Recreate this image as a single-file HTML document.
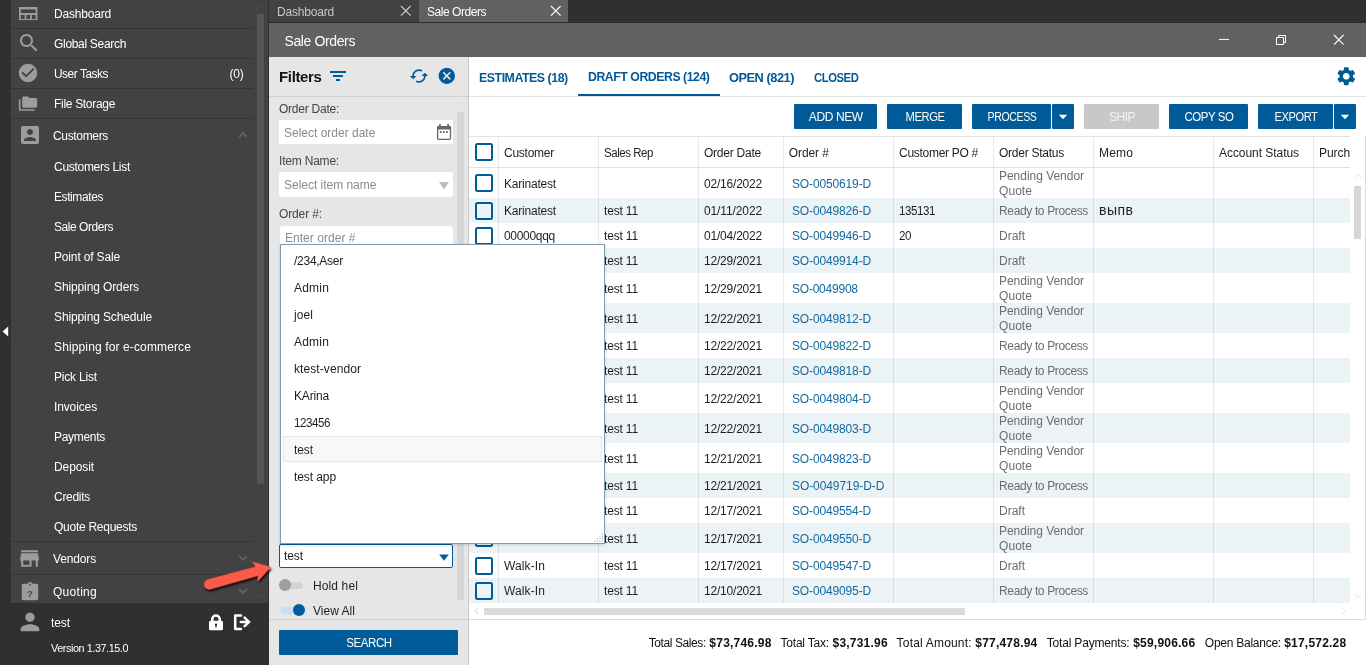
<!DOCTYPE html>
<html lang="en"><head><meta charset="utf-8"><title>Sale Orders</title>
<style>
html,body{margin:0;padding:0;}
body{width:1366px;height:665px;overflow:hidden;background:#303030;font-family:"Liberation Sans", sans-serif;}
#app{position:relative;width:1366px;height:665px;overflow:hidden;background:#303030;will-change:transform;}
.r{position:absolute;display:block;}
.t{position:absolute;display:block;white-space:nowrap;line-height:20px;height:20px;font-family:"Liberation Sans", sans-serif;}
</style></head><body><div id="app">
<div class="r" style="left:0px;top:0px;width:11px;height:665px;background:#303030;"></div>
<svg class="r" style="left:2px;top:326px;" width="7" height="11" viewBox="0 0 7 11" preserveAspectRatio="none"><path d="M0.6 5.5L6.2 0.6V10.4Z" fill="#fff"/></svg>
<div class="r" style="left:11px;top:0px;width:257px;height:603px;background:#424242;"></div>
<div class="r" style="left:11px;top:603px;width:257px;height:62px;background:#303030;"></div>
<div class="r" style="left:268px;top:0px;width:1px;height:665px;background:#303030;"></div>
<span class="t" style="left:54.00px;top:4.00px;font-size:12px;color:#fff;letter-spacing:-0.190px;">Dashboard</span>
<span class="t" style="left:54.00px;top:34.00px;font-size:12px;color:#fff;letter-spacing:-0.311px;">Global Search</span>
<span class="t" style="left:54.00px;top:64.00px;font-size:12px;color:#fff;letter-spacing:-0.450px;transform:scaleX(0.9885);transform-origin:left center;">User Tasks</span>
<span class="t" style="left:54.00px;top:94.00px;font-size:12px;color:#fff;letter-spacing:-0.308px;">File Storage</span>
<span class="t" style="right:1122.50px;top:64.00px;font-size:12px;color:#fff;letter-spacing:-0.222px;">(0)</span>
<div class="r" style="left:11px;top:28px;width:242px;height:1px;background:#353535;"></div>
<div class="r" style="left:11px;top:58px;width:242px;height:1px;background:#353535;"></div>
<div class="r" style="left:11px;top:88px;width:242px;height:1px;background:#353535;"></div>
<div class="r" style="left:11px;top:118px;width:242px;height:1px;background:#353535;"></div>
<span class="t" style="left:53.00px;top:126.00px;font-size:12px;color:#fff;letter-spacing:-0.335px;">Customers</span>
<span class="t" style="left:53.00px;top:549.00px;font-size:12px;color:#fff;letter-spacing:-0.148px;">Vendors</span>
<span class="t" style="left:53.00px;top:582.00px;font-size:12px;color:#fff;letter-spacing:0.281px;">Quoting</span>
<div class="r" style="left:11px;top:541px;width:241px;height:1px;background:#353535;"></div>
<div class="r" style="left:11px;top:574px;width:241px;height:1px;background:#353535;"></div>
<span class="t" style="left:54.00px;top:157.00px;font-size:12px;color:#fff;letter-spacing:-0.287px;">Customers List</span>
<span class="t" style="left:54.00px;top:187.00px;font-size:12px;color:#fff;letter-spacing:-0.409px;">Estimates</span>
<span class="t" style="left:54.00px;top:217.00px;font-size:12px;color:#fff;letter-spacing:-0.450px;">Sale Orders</span>
<span class="t" style="left:54.00px;top:247.00px;font-size:12px;color:#fff;letter-spacing:-0.157px;">Point of Sale</span>
<span class="t" style="left:54.00px;top:277.00px;font-size:12px;color:#fff;letter-spacing:-0.114px;">Shipping Orders</span>
<span class="t" style="left:54.00px;top:307.00px;font-size:12px;color:#fff;letter-spacing:-0.122px;">Shipping Schedule</span>
<span class="t" style="left:54.00px;top:337.00px;font-size:12px;color:#fff;letter-spacing:0.128px;">Shipping for e-commerce</span>
<span class="t" style="left:54.00px;top:367.00px;font-size:12px;color:#fff;letter-spacing:-0.186px;">Pick List</span>
<span class="t" style="left:54.00px;top:397.00px;font-size:12px;color:#fff;letter-spacing:-0.128px;">Invoices</span>
<span class="t" style="left:54.00px;top:427.00px;font-size:12px;color:#fff;letter-spacing:-0.295px;">Payments</span>
<span class="t" style="left:54.00px;top:457.00px;font-size:12px;color:#fff;letter-spacing:-0.098px;">Deposit</span>
<span class="t" style="left:54.00px;top:487.00px;font-size:12px;color:#fff;letter-spacing:-0.287px;">Credits</span>
<span class="t" style="left:54.00px;top:517.00px;font-size:12px;color:#fff;letter-spacing:-0.266px;">Quote Requests</span>
<svg class="r" style="left:19.3px;top:6.7px;" width="18.4" height="13.7" viewBox="0 0 18.400 13.700" preserveAspectRatio="none"><path fill="none" stroke="#9c9c9c" stroke-width="1.800" d="M0.900 0.900H17.500V12.800H0.900Z M0.900 7H17.500 M6.500 7V12.800 M11.900 7V12.800"/><rect x="0.900" y="0.900" width="16.600" height="1.500" fill="#9c9c9c"/></svg>
<svg class="r" style="left:17px;top:31px;" width="24" height="24" viewBox="0 0 24 24" preserveAspectRatio="none"><path fill="#9c9c9c" d="M15.5 14h-.79l-.28-.27C15.41 12.59 16 11.11 16 9.5 16 5.91 13.09 3 9.5 3S3 5.91 3 9.5 5.91 16 9.5 16c1.61 0 3.09-.59 4.23-1.57l.27.28v.79l5 4.99L20.49 19l-4.99-5zm-6 0C7.01 14 5 11.99 5 9.5S7.01 5 9.5 5 14 7.01 14 9.5 11.99 14 9.5 14z"/></svg>
<svg class="r" style="left:17.1px;top:62px;" width="22" height="22" viewBox="0 0 24 24" preserveAspectRatio="none"><path fill="#9c9c9c" d="M12 2C6.48 2 2 6.48 2 12s4.48 10 10 10 10-4.48 10-10S17.52 2 12 2zm-2 15l-5-5 1.41-1.41L10 14.17l7.59-7.59L19 8l-9 9z"/></svg>
<svg class="r" style="left:18.3px;top:94.8px;" width="20" height="18" viewBox="0 0 24 24" preserveAspectRatio="none"><path fill="#9c9c9c" d="M3 6H1v13c0 1.1.9 2 2 2h17v-2H3V6z M21 4h-7l-2-2H7c-1.1 0-1.99.9-1.99 2L5 15c0 1.1.9 2 2 2h14c1.1 0 2-.9 2-2V6c0-1.1-.9-2-2-2z"/></svg>
<svg class="r" style="left:17.7px;top:123.3px;" width="24" height="24" viewBox="0 0 24 24" preserveAspectRatio="none"><path fill="#9c9c9c" d="M3 5v14c0 1.1.89 2 2 2h14c1.1 0 2-.9 2-2V5c0-1.1-.9-2-2-2H5c-1.11 0-2 .9-2 2zm12 4c0 1.66-1.34 3-3 3s-3-1.34-3-3 1.34-3 3-3 3 1.34 3 3zm-9 8c0-2 4-3.1 6-3.1s6 1.1 6 3.1v1H6v-1z"/></svg>
<svg class="r" style="left:17px;top:545.7px;" width="25" height="25" viewBox="0 0 24 24" preserveAspectRatio="none"><path fill="#9c9c9c" d="M20 4H4v2h16V4zm1 10v-2l-1-5H4l-1 5v2h1v6h10v-6h4v6h2v-6h1zm-9 4H6v-4h6v4z"/></svg>
<svg class="r" style="left:18.5px;top:581px;" width="22" height="22" viewBox="0 0 24 24" preserveAspectRatio="none"><path fill="#9c9c9c" d="M19 3h-4.18C14.4 1.84 13.3 1 12 1s-2.4.84-2.82 2H5c-1.1 0-2 .9-2 2v14c0 1.1.9 2 2 2h14c1.1 0 2-.9 2-2V5c0-1.1-.9-2-2-2zm-7 0c.55 0 1 .45 1 1s-.45 1-1 1-1-.45-1-1 .45-1 1-1z"/><text x="12" y="17.5" font-size="10.500" font-weight="700" text-anchor="middle" fill="#424242" font-family='"Liberation Sans",sans-serif'>?</text></svg>
<svg class="r" style="left:234.8px;top:126.5px;" width="16" height="16" viewBox="-8 -8 16 16" preserveAspectRatio="none"><path d="M-3.8 1.9L0 -1.9L3.8 1.9" fill="none" stroke="#646464" stroke-width="1.9"/></svg>
<svg class="r" style="left:234.8px;top:550px;" width="16" height="16" viewBox="-8 -8 16 16" preserveAspectRatio="none"><path d="M-3.8 -1.9L0 1.9L3.8 -1.9" fill="none" stroke="#646464" stroke-width="1.9"/></svg>
<svg class="r" style="left:234.8px;top:583px;" width="16" height="16" viewBox="-8 -8 16 16" preserveAspectRatio="none"><path d="M-3.8 -1.9L0 1.9L3.8 -1.9" fill="none" stroke="#646464" stroke-width="1.9"/></svg>
<div class="r" style="left:257px;top:14px;width:7px;height:470px;background:#555;"></div>
<svg class="r" style="left:252.5px;top:-1px;" width="16" height="16" viewBox="-8 -8 16 16" preserveAspectRatio="none"><path d="M-3.5 1.75L0 -1.75L3.5 1.75" fill="none" stroke="#505050" stroke-width="1"/></svg>
<svg class="r" style="left:252.5px;top:588px;" width="16" height="16" viewBox="-8 -8 16 16" preserveAspectRatio="none"><path d="M-3.5 -1.75L0 1.75L3.5 -1.75" fill="none" stroke="#505050" stroke-width="1"/></svg>
<svg class="r" style="left:16px;top:608.1px;" width="28" height="28" viewBox="0 0 24 24" preserveAspectRatio="none"><path fill="#9c9c9c" d="M12 12c2.21 0 4-1.79 4-4s-1.79-4-4-4-4 1.79-4 4 1.79 4 4 4zm0 2c-2.67 0-8 1.34-8 4v2h16v-2c0-2.66-5.33-4-8-4z"/></svg>
<span class="t" style="left:51.00px;top:613.00px;font-size:12px;color:#fff;letter-spacing:-0.085px;">test</span>
<span class="t" style="left:51.00px;top:638.00px;font-size:11.5px;color:#fff;letter-spacing:-0.431px;transform:scaleX(0.9369);transform-origin:left center;">Version 1.37.15.0</span>
<svg class="r" style="left:206px;top:611px;" width="48" height="22" viewBox="206 611 48 22" preserveAspectRatio="none"><rect x="209" y="620.700" width="14" height="9.500" rx="1.500" fill="#fff"/><path d="M212.250 622V619.300A3.750 3.750 0 0 1 219.750 619.300V622" fill="none" stroke="#fff" stroke-width="2.600"/><circle cx="216" cy="624.700" r="1.150" fill="#303030"/><rect x="215.450" y="624.700" width="1.100" height="3" fill="#303030"/><path d="M241 615.400H235.200V628.900H241" fill="none" stroke="#fff" stroke-width="2.500" stroke-linecap="round" stroke-linejoin="round"/><path d="M240.800 621.900H248.300M244.600 617.600L249 621.900L244.600 626.200" fill="none" stroke="#fff" stroke-width="2.500" stroke-linecap="round" stroke-linejoin="miter"/></svg>
<div class="r" style="left:269px;top:0px;width:149.5px;height:22px;background:#424242;"></div>
<div class="r" style="left:419px;top:0px;width:149px;height:22px;background:#616161;"></div>
<div class="r" style="left:269px;top:22px;width:1097px;height:1px;background:#2b2b2b;"></div>
<span class="t" style="left:277.00px;top:2.00px;font-size:12px;color:#c8c8c8;letter-spacing:-0.190px;">Dashboard</span>
<span class="t" style="left:427.00px;top:2.00px;font-size:12px;color:#fff;letter-spacing:-0.450px;">Sale Orders</span>
<svg class="r" style="left:400.2px;top:4.8999999999999995px;" width="11.6" height="11.6" viewBox="-5.8 -5.8 11.6 11.6" preserveAspectRatio="none"><path d="M-4.8 -4.8L4.8 4.8M4.8 -4.8L-4.8 4.8" stroke="#d0d0d0" stroke-width="1.1" fill="none"/></svg>
<svg class="r" style="left:550.2px;top:4.8999999999999995px;" width="11.6" height="11.6" viewBox="-5.8 -5.8 11.6 11.6" preserveAspectRatio="none"><path d="M-4.8 -4.8L4.8 4.8M4.8 -4.8L-4.8 4.8" stroke="#fff" stroke-width="1.1" fill="none"/></svg>
<div class="r" style="left:269px;top:23px;width:1097px;height:34px;background:#616161;"></div>
<span class="t" style="left:284.50px;top:31.00px;font-size:14px;color:#fff;letter-spacing:-0.382px;">Sale Orders</span>
<div class="r" style="left:1219px;top:39.4px;width:10px;height:1.1px;background:#f4f4f4;"></div>
<svg class="r" style="left:1275.3px;top:34.2px;" width="12" height="12" viewBox="0 0 12 12" preserveAspectRatio="none"><path d="M1.500 3.500H8.500V10.500H1.500Z M3.500 3.500V1.500H10.500V8.500H8.500" fill="none" stroke="#fff" stroke-width="1"/></svg>
<svg class="r" style="left:1332.7px;top:34.300000000000004px;" width="11.6" height="11.6" viewBox="-5.8 -5.8 11.6 11.6" preserveAspectRatio="none"><path d="M-4.8 -4.8L4.8 4.8M4.8 -4.8L-4.8 4.8" stroke="#fff" stroke-width="1.1" fill="none"/></svg>
<div class="r" style="left:269px;top:57px;width:199px;height:608px;background:#e6e6e6;"></div>
<div class="r" style="left:468px;top:57px;width:1px;height:608px;background:#c9c9c9;"></div>
<div class="r" style="left:469px;top:57px;width:897px;height:608px;background:#fff;"></div>
<span class="t" style="left:279.00px;top:67.00px;font-size:15px;color:#111;letter-spacing:-0.345px;font-weight:700;">Filters</span>
<div class="r" style="left:329.8px;top:70.8px;width:16.4px;height:2.2px;background:#005b99;"></div>
<div class="r" style="left:332.9px;top:75px;width:10.3px;height:2.2px;background:#005b99;"></div>
<div class="r" style="left:336.2px;top:79.2px;width:3.8px;height:2.2px;background:#005b99;"></div>
<svg class="r" style="left:409px;top:65.6px;" width="20" height="20" viewBox="0 0 24 24" preserveAspectRatio="none"><path fill="#005b99" d="M19 8l-4 4h3c0 3.310-2.690 6-6 6-1.010 0-1.970-.250-2.800-.700l-1.460 1.460C8.970 19.540 10.430 20 12 20c4.420 0 8-3.580 8-8h3l-4-4zM6 12c0-3.310 2.690-6 6-6 1.010 0 1.970.250 2.800.700l1.460-1.460C15.030 4.460 13.570 4 12 4c-4.420 0-8 3.580-8 8H1l4 4 4-4H6z"/></svg>
<svg class="r" style="left:437.2px;top:66.2px;" width="19.6" height="19.6" viewBox="0 0 24 24" preserveAspectRatio="none"><path fill="#005b99" d="M12 2C6.470 2 2 6.470 2 12s4.470 10 10 10 10-4.470 10-10S17.530 2 12 2zm5 13.590L15.590 17 12 13.410 8.410 17 7 15.590 10.590 12 7 8.410 8.410 7 12 10.590 15.590 7 17 8.410 13.410 12 17 15.590z"/></svg>
<div class="r" style="left:269px;top:96px;width:199px;height:1px;background:#d2d2d2;"></div>
<span class="t" style="left:279.00px;top:99.00px;font-size:12px;color:#444;letter-spacing:-0.245px;">Order Date:</span>
<div class="r" style="left:279px;top:120px;width:174px;height:24px;background:#fff;border-radius:1px;"></div>
<span class="t" style="left:284.00px;top:123.00px;font-size:12px;color:#8a8a8a;letter-spacing:-0.005px;">Select order date</span>
<svg class="r" style="left:436px;top:123px;" width="16" height="18" viewBox="436 123 16 18" preserveAspectRatio="none"><rect x="437.600" y="126.600" width="12.900" height="12.800" rx="1.300" fill="none" stroke="#666" stroke-width="1.300"/><rect x="437" y="126" width="14.100" height="3.600" rx="1" fill="#666"/><rect x="439.100" y="124" width="1.700" height="3" fill="#666"/><rect x="447.300" y="124" width="1.700" height="3" fill="#666"/><rect x="439.800" y="131.100" width="1.800" height="1.800" fill="#666"/><rect x="442.950" y="131.100" width="1.800" height="1.800" fill="#666"/><rect x="446.100" y="131.100" width="1.800" height="1.800" fill="#666"/></svg>
<span class="t" style="left:279.00px;top:151.00px;font-size:12px;color:#444;letter-spacing:-0.202px;">Item Name:</span>
<div class="r" style="left:279px;top:172px;width:174px;height:25px;background:#fff;border-radius:3px;"></div>
<span class="t" style="left:284.00px;top:175.00px;font-size:12px;color:#8a8a8a;letter-spacing:-0.019px;">Select item name</span>
<svg class="r" style="left:439.3px;top:181.8px;" width="10" height="7.4" viewBox="0 0 10 7.400" preserveAspectRatio="none"><path d="M0 0H10L5 7.400Z" fill="#bcbcbc"/></svg>
<span class="t" style="left:279.00px;top:204.00px;font-size:12px;color:#444;letter-spacing:-0.127px;">Order #:</span>
<div class="r" style="left:279.5px;top:226px;width:173px;height:25px;background:#fff;border-radius:3px;"></div>
<span class="t" style="left:285.00px;top:228.00px;font-size:12px;color:#8a8a8a;letter-spacing:0.035px;">Enter order #</span>
<div class="r" style="left:457px;top:112px;width:7px;height:488px;background:#d7d7d7;"></div>
<svg class="r" style="left:452.5px;top:96px;" width="16" height="16" viewBox="-8 -8 16 16" preserveAspectRatio="none"><path d="M-3.5 1.75L0 -1.75L3.5 1.75" fill="none" stroke="#dbdbdb" stroke-width="1"/></svg>
<svg class="r" style="left:452.5px;top:603px;" width="16" height="16" viewBox="-8 -8 16 16" preserveAspectRatio="none"><path d="M-3.5 -1.75L0 1.75L3.5 -1.75" fill="none" stroke="#dbdbdb" stroke-width="1"/></svg>
<div class="r" style="left:279px;top:544px;width:174px;height:24px;background:#fff;border:1px solid #005b99;box-sizing:border-box;border-radius:2px;"></div>
<span class="t" style="left:284.00px;top:546.00px;font-size:12px;color:#1e1e1e;letter-spacing:-0.085px;">test</span>
<svg class="r" style="left:438.5px;top:553.5px;" width="10" height="7" viewBox="0 0 10 7" preserveAspectRatio="none"><path d="M0.200 0.400H9.800L5 6.700Z" fill="#005b99"/></svg>
<div class="r" style="left:281px;top:581.5px;width:22px;height:7.5px;background:#d4d4d4;border-radius:4px;"></div>
<div class="r" style="left:279px;top:579.3px;width:12px;height:12px;background:#9e9e9e;border-radius:6px;"></div>
<span class="t" style="left:313.00px;top:576.00px;font-size:12px;color:#1e1e1e;letter-spacing:0.121px;">Hold hel</span>
<div class="r" style="left:281px;top:606.7px;width:22px;height:7.5px;background:#ccdafa;border-radius:4px;"></div>
<div class="r" style="left:293px;top:604.4px;width:12px;height:12px;background:#005b99;border-radius:6px;"></div>
<span class="t" style="left:313.00px;top:601.00px;font-size:12px;color:#1e1e1e;letter-spacing:0.025px;">View All</span>
<div class="r" style="left:269px;top:619px;width:199px;height:1px;background:#d2d2d2;"></div>
<div class="r" style="left:279px;top:630px;width:179px;height:25px;background:#005b99;border-radius:1px;"></div>
<span class="t" style="left:168.70px;width:400px;text-align:center;top:633.00px;font-size:12px;color:#fff;letter-spacing:-0.450px;transform:scaleX(0.9575);transform-origin:center center;">SEARCH</span>
<span class="t" style="left:478.60px;top:68.00px;font-size:13px;color:#005a96;letter-spacing:-0.488px;font-weight:700;transform:scaleX(0.9503);transform-origin:left center;">ESTIMATES (18)</span>
<span class="t" style="left:587.80px;top:67.00px;font-size:13px;color:#005a96;letter-spacing:-0.488px;font-weight:700;transform:scaleX(0.9458);transform-origin:left center;">DRAFT ORDERS (124)</span>
<span class="t" style="left:729.20px;top:68.00px;font-size:13px;color:#005a96;letter-spacing:-0.488px;font-weight:700;transform:scaleX(0.9859);transform-origin:left center;">OPEN (821)</span>
<span class="t" style="left:814.40px;top:68.00px;font-size:13px;color:#005a96;letter-spacing:-0.488px;font-weight:700;transform:scaleX(0.8664);transform-origin:left center;">CLOSED</span>
<div class="r" style="left:469px;top:96px;width:897px;height:1px;background:#e4e4e4;"></div>
<div class="r" style="left:578px;top:94px;width:142px;height:2px;background:#005a96;"></div>
<svg class="r" style="left:1334.75px;top:65.15px;" width="22.5" height="22.5" viewBox="0 0 24 24" preserveAspectRatio="none"><path fill="#005b99" d="M19.140 12.940c.040-.300.060-.610.060-.940 0-.320-.020-.640-.070-.940l2.030-1.580c.180-.140.230-.410.120-.610l-1.920-3.320c-.120-.220-.370-.290-.590-.220l-2.390.960c-.500-.380-1.030-.700-1.620-.940l-.360-2.540c-.040-.240-.240-.410-.480-.410h-3.840c-.240 0-.430.170-.470.410l-.360 2.540c-.590.240-1.130.570-1.620.940l-2.390-.960c-.220-.080-.470 0-.590.220L2.740 8.870c-.120.210-.080.470.120.610l2.030 1.580c-.050.300-.090.630-.090.940s.020.640.070.940l-2.030 1.580c-.180.140-.230.410-.120.610l1.920 3.320c.120.220.370.290.590.220l2.390-.960c.500.380 1.030.700 1.620.940l.360 2.540c.050.240.240.410.480.410h3.840c.240 0 .440-.170.470-.410l.360-2.540c.590-.240 1.130-.560 1.620-.940l2.390.960c.220.080.470 0 .590-.220l1.920-3.320c.120-.220.070-.470-.120-.610l-2.010-1.580zM12 15.600c-1.980 0-3.600-1.620-3.600-3.600s1.620-3.600 3.600-3.600 3.600 1.620 3.600 3.600-1.620 3.600-3.600 3.600z"/></svg>
<div class="r" style="left:794px;top:104px;width:83px;height:25px;background:#005b99;border-radius:1px;"></div>
<span class="t" style="left:635.80px;width:400px;text-align:center;top:107.00px;font-size:12px;color:#fff;letter-spacing:-0.381px;">ADD NEW</span>
<div class="r" style="left:887px;top:104px;width:75px;height:25px;background:#005b99;border-radius:1px;"></div>
<span class="t" style="left:724.80px;width:400px;text-align:center;top:107.00px;font-size:12px;color:#fff;letter-spacing:-0.450px;transform:scaleX(0.9340);transform-origin:center center;">MERGE</span>
<div class="r" style="left:972px;top:104px;width:79px;height:25px;background:#005b99;border-radius:1px;"></div>
<span class="t" style="left:811.80px;width:400px;text-align:center;top:107.00px;font-size:12px;color:#fff;letter-spacing:-0.450px;transform:scaleX(0.8823);transform-origin:center center;">PROCESS</span>
<div class="r" style="left:1052px;top:104px;width:22px;height:25px;background:#005b99;border-radius:1px;"></div>
<svg class="r" style="left:1058.0px;top:114px;" width="10" height="6" viewBox="0 0 10 6" preserveAspectRatio="none"><path d="M0.800 0.800H9.200L5 5.200Z" fill="#fff"/></svg>
<div class="r" style="left:1084px;top:104px;width:75px;height:25px;background:#c8c8c8;border-radius:1px;"></div>
<span class="t" style="left:921.80px;width:400px;text-align:center;top:107.00px;font-size:12px;color:#f4f4f4;letter-spacing:-0.450px;transform:scaleX(0.9920);transform-origin:center center;">SHIP</span>
<div class="r" style="left:1169px;top:104px;width:79px;height:25px;background:#005b99;border-radius:1px;"></div>
<span class="t" style="left:1008.80px;width:400px;text-align:center;top:107.00px;font-size:12px;color:#fff;letter-spacing:-0.450px;transform:scaleX(0.9549);transform-origin:center center;">COPY SO</span>
<div class="r" style="left:1258px;top:104px;width:75px;height:25px;background:#005b99;border-radius:1px;"></div>
<span class="t" style="left:1095.80px;width:400px;text-align:center;top:107.00px;font-size:12px;color:#fff;letter-spacing:-0.450px;transform:scaleX(0.9262);transform-origin:center center;">EXPORT</span>
<div class="r" style="left:1334px;top:104px;width:22px;height:25px;background:#005b99;border-radius:1px;"></div>
<svg class="r" style="left:1340.0px;top:114px;" width="10" height="6" viewBox="0 0 10 6" preserveAspectRatio="none"><path d="M0.800 0.800H9.200L5 5.200Z" fill="#fff"/></svg>
<div class="r" style="left:469px;top:136px;width:881px;height:1px;background:#e2e2e2;"></div>
<div class="r" style="left:469px;top:167px;width:881px;height:1px;background:#e2e2e2;"></div>
<span class="t" style="left:504.00px;top:143.00px;font-size:12px;color:#1e1e1e;letter-spacing:-0.252px;">Customer</span>
<span class="t" style="left:604.00px;top:143.00px;font-size:12px;color:#1e1e1e;letter-spacing:-0.450px;transform:scaleX(0.9549);transform-origin:left center;">Sales Rep</span>
<span class="t" style="left:704.00px;top:143.00px;font-size:12px;color:#1e1e1e;letter-spacing:-0.236px;">Order Date</span>
<span class="t" style="left:788.80px;top:143.00px;font-size:12px;color:#1e1e1e;letter-spacing:-0.098px;">Order #</span>
<span class="t" style="left:899.00px;top:143.00px;font-size:12px;color:#1e1e1e;letter-spacing:-0.284px;">Customer PO #</span>
<span class="t" style="left:999.00px;top:143.00px;font-size:12px;color:#1e1e1e;letter-spacing:-0.252px;">Order Status</span>
<span class="t" style="left:1099.00px;top:143.00px;font-size:12px;color:#1e1e1e;letter-spacing:0.165px;">Memo</span>
<span class="t" style="left:1219.00px;top:143.00px;font-size:12px;color:#1e1e1e;letter-spacing:-0.051px;">Account Status</span>
<span class="t" style="left:1319.00px;top:143.00px;font-size:12px;color:#1e1e1e;letter-spacing:-0.070px;">Purch</span>
<div class="r" style="left:475px;top:143px;width:18px;height:18px;background:transparent;border:2px solid #005b99;box-sizing:border-box;border-radius:2.500px;"></div>
<div class="r" style="left:475px;top:174.0px;width:18px;height:18px;background:transparent;border:2px solid #005b99;box-sizing:border-box;border-radius:2.500px;"></div>
<span class="t" style="left:504.00px;top:174.00px;font-size:12px;color:#1e1e1e;letter-spacing:-0.203px;">Karinatest</span>
<span class="t" style="left:704.00px;top:174.00px;font-size:12px;color:#1e1e1e;letter-spacing:-0.206px;">02/16/2022</span>
<span class="t" style="left:792.00px;top:174.00px;font-size:12px;color:#12699f;letter-spacing:-0.142px;">SO-0050619-D</span>
<span class="t" style="left:999.00px;top:166.00px;font-size:12px;color:#6c6c6c;letter-spacing:-0.029px;">Pending Vendor</span>
<span class="t" style="left:999.00px;top:181.00px;font-size:12px;color:#6c6c6c;letter-spacing:0.062px;">Quote</span>
<div class="r" style="left:469px;top:198px;width:881px;height:25px;background:#ecf3f7;"></div>
<div class="r" style="left:475px;top:201.5px;width:18px;height:18px;background:transparent;border:2px solid #005b99;box-sizing:border-box;border-radius:2.500px;"></div>
<span class="t" style="left:504.00px;top:201.00px;font-size:12px;color:#1e1e1e;letter-spacing:-0.203px;">Karinatest</span>
<span class="t" style="left:604.00px;top:201.00px;font-size:12px;color:#1e1e1e;letter-spacing:-0.162px;">test 11</span>
<span class="t" style="left:704.00px;top:201.00px;font-size:12px;color:#1e1e1e;letter-spacing:-0.117px;">01/11/2022</span>
<span class="t" style="left:792.00px;top:201.00px;font-size:12px;color:#12699f;letter-spacing:-0.142px;">SO-0049826-D</span>
<span class="t" style="left:899.00px;top:201.00px;font-size:12px;color:#1e1e1e;letter-spacing:-0.450px;transform:scaleX(0.9640);transform-origin:left center;">135131</span>
<span class="t" style="left:999.00px;top:201.00px;font-size:12px;color:#6c6c6c;letter-spacing:-0.357px;">Ready to Process</span>
<span class="t" style="left:1099.00px;top:200.00px;font-size:14px;color:#1e1e1e;letter-spacing:0.445px;">выпв</span>
<div class="r" style="left:475px;top:226.5px;width:18px;height:18px;background:transparent;border:2px solid #005b99;box-sizing:border-box;border-radius:2.500px;"></div>
<span class="t" style="left:504.00px;top:226.00px;font-size:12px;color:#1e1e1e;letter-spacing:-0.299px;">00000qqq</span>
<span class="t" style="left:604.00px;top:226.00px;font-size:12px;color:#1e1e1e;letter-spacing:-0.162px;">test 11</span>
<span class="t" style="left:704.00px;top:226.00px;font-size:12px;color:#1e1e1e;letter-spacing:-0.206px;">01/04/2022</span>
<span class="t" style="left:792.00px;top:226.00px;font-size:12px;color:#12699f;letter-spacing:-0.142px;">SO-0049946-D</span>
<span class="t" style="left:899.00px;top:226.00px;font-size:12px;color:#1e1e1e;letter-spacing:-0.450px;transform:scaleX(0.9640);transform-origin:left center;">20</span>
<span class="t" style="left:999.00px;top:226.00px;font-size:12px;color:#6c6c6c;letter-spacing:-0.001px;">Draft</span>
<div class="r" style="left:469px;top:248px;width:881px;height:25px;background:#ecf3f7;"></div>
<div class="r" style="left:475px;top:251.5px;width:18px;height:18px;background:transparent;border:2px solid #005b99;box-sizing:border-box;border-radius:2.500px;"></div>
<span class="t" style="left:604.00px;top:251.00px;font-size:12px;color:#1e1e1e;letter-spacing:-0.162px;">test 11</span>
<span class="t" style="left:704.00px;top:251.00px;font-size:12px;color:#1e1e1e;letter-spacing:-0.206px;">12/29/2021</span>
<span class="t" style="left:792.00px;top:251.00px;font-size:12px;color:#12699f;letter-spacing:-0.142px;">SO-0049914-D</span>
<span class="t" style="left:999.00px;top:251.00px;font-size:12px;color:#6c6c6c;letter-spacing:-0.001px;">Draft</span>
<div class="r" style="left:475px;top:279.0px;width:18px;height:18px;background:transparent;border:2px solid #005b99;box-sizing:border-box;border-radius:2.500px;"></div>
<span class="t" style="left:604.00px;top:279.00px;font-size:12px;color:#1e1e1e;letter-spacing:-0.162px;">test 11</span>
<span class="t" style="left:704.00px;top:279.00px;font-size:12px;color:#1e1e1e;letter-spacing:-0.206px;">12/29/2021</span>
<span class="t" style="left:792.00px;top:279.00px;font-size:12px;color:#12699f;letter-spacing:-0.226px;">SO-0049908</span>
<span class="t" style="left:999.00px;top:271.00px;font-size:12px;color:#6c6c6c;letter-spacing:-0.029px;">Pending Vendor</span>
<span class="t" style="left:999.00px;top:286.00px;font-size:12px;color:#6c6c6c;letter-spacing:0.062px;">Quote</span>
<div class="r" style="left:469px;top:303px;width:881px;height:30px;background:#ecf3f7;"></div>
<div class="r" style="left:475px;top:309.0px;width:18px;height:18px;background:transparent;border:2px solid #005b99;box-sizing:border-box;border-radius:2.500px;"></div>
<span class="t" style="left:604.00px;top:309.00px;font-size:12px;color:#1e1e1e;letter-spacing:-0.162px;">test 11</span>
<span class="t" style="left:704.00px;top:309.00px;font-size:12px;color:#1e1e1e;letter-spacing:-0.206px;">12/22/2021</span>
<span class="t" style="left:792.00px;top:309.00px;font-size:12px;color:#12699f;letter-spacing:-0.142px;">SO-0049812-D</span>
<span class="t" style="left:999.00px;top:301.00px;font-size:12px;color:#6c6c6c;letter-spacing:-0.029px;">Pending Vendor</span>
<span class="t" style="left:999.00px;top:316.00px;font-size:12px;color:#6c6c6c;letter-spacing:0.062px;">Quote</span>
<div class="r" style="left:475px;top:336.5px;width:18px;height:18px;background:transparent;border:2px solid #005b99;box-sizing:border-box;border-radius:2.500px;"></div>
<span class="t" style="left:604.00px;top:336.00px;font-size:12px;color:#1e1e1e;letter-spacing:-0.162px;">test 11</span>
<span class="t" style="left:704.00px;top:336.00px;font-size:12px;color:#1e1e1e;letter-spacing:-0.206px;">12/22/2021</span>
<span class="t" style="left:792.00px;top:336.00px;font-size:12px;color:#12699f;letter-spacing:-0.142px;">SO-0049822-D</span>
<span class="t" style="left:999.00px;top:336.00px;font-size:12px;color:#6c6c6c;letter-spacing:-0.357px;">Ready to Process</span>
<div class="r" style="left:469px;top:358px;width:881px;height:25px;background:#ecf3f7;"></div>
<div class="r" style="left:475px;top:361.5px;width:18px;height:18px;background:transparent;border:2px solid #005b99;box-sizing:border-box;border-radius:2.500px;"></div>
<span class="t" style="left:604.00px;top:361.00px;font-size:12px;color:#1e1e1e;letter-spacing:-0.162px;">test 11</span>
<span class="t" style="left:704.00px;top:361.00px;font-size:12px;color:#1e1e1e;letter-spacing:-0.206px;">12/22/2021</span>
<span class="t" style="left:792.00px;top:361.00px;font-size:12px;color:#12699f;letter-spacing:-0.142px;">SO-0049818-D</span>
<span class="t" style="left:999.00px;top:361.00px;font-size:12px;color:#6c6c6c;letter-spacing:-0.357px;">Ready to Process</span>
<div class="r" style="left:475px;top:389.0px;width:18px;height:18px;background:transparent;border:2px solid #005b99;box-sizing:border-box;border-radius:2.500px;"></div>
<span class="t" style="left:604.00px;top:389.00px;font-size:12px;color:#1e1e1e;letter-spacing:-0.162px;">test 11</span>
<span class="t" style="left:704.00px;top:389.00px;font-size:12px;color:#1e1e1e;letter-spacing:-0.206px;">12/22/2021</span>
<span class="t" style="left:792.00px;top:389.00px;font-size:12px;color:#12699f;letter-spacing:-0.142px;">SO-0049804-D</span>
<span class="t" style="left:999.00px;top:381.00px;font-size:12px;color:#6c6c6c;letter-spacing:-0.029px;">Pending Vendor</span>
<span class="t" style="left:999.00px;top:396.00px;font-size:12px;color:#6c6c6c;letter-spacing:0.062px;">Quote</span>
<div class="r" style="left:469px;top:413px;width:881px;height:30px;background:#ecf3f7;"></div>
<div class="r" style="left:475px;top:419.0px;width:18px;height:18px;background:transparent;border:2px solid #005b99;box-sizing:border-box;border-radius:2.500px;"></div>
<span class="t" style="left:604.00px;top:419.00px;font-size:12px;color:#1e1e1e;letter-spacing:-0.162px;">test 11</span>
<span class="t" style="left:704.00px;top:419.00px;font-size:12px;color:#1e1e1e;letter-spacing:-0.206px;">12/22/2021</span>
<span class="t" style="left:792.00px;top:419.00px;font-size:12px;color:#12699f;letter-spacing:-0.142px;">SO-0049803-D</span>
<span class="t" style="left:999.00px;top:411.00px;font-size:12px;color:#6c6c6c;letter-spacing:-0.029px;">Pending Vendor</span>
<span class="t" style="left:999.00px;top:426.00px;font-size:12px;color:#6c6c6c;letter-spacing:0.062px;">Quote</span>
<div class="r" style="left:475px;top:449.0px;width:18px;height:18px;background:transparent;border:2px solid #005b99;box-sizing:border-box;border-radius:2.500px;"></div>
<span class="t" style="left:604.00px;top:449.00px;font-size:12px;color:#1e1e1e;letter-spacing:-0.162px;">test 11</span>
<span class="t" style="left:704.00px;top:449.00px;font-size:12px;color:#1e1e1e;letter-spacing:-0.206px;">12/21/2021</span>
<span class="t" style="left:792.00px;top:449.00px;font-size:12px;color:#12699f;letter-spacing:-0.142px;">SO-0049823-D</span>
<span class="t" style="left:999.00px;top:441.00px;font-size:12px;color:#6c6c6c;letter-spacing:-0.029px;">Pending Vendor</span>
<span class="t" style="left:999.00px;top:456.00px;font-size:12px;color:#6c6c6c;letter-spacing:0.062px;">Quote</span>
<div class="r" style="left:469px;top:473px;width:881px;height:25px;background:#ecf3f7;"></div>
<div class="r" style="left:475px;top:476.5px;width:18px;height:18px;background:transparent;border:2px solid #005b99;box-sizing:border-box;border-radius:2.500px;"></div>
<span class="t" style="left:604.00px;top:476.00px;font-size:12px;color:#1e1e1e;letter-spacing:-0.162px;">test 11</span>
<span class="t" style="left:704.00px;top:476.00px;font-size:12px;color:#1e1e1e;letter-spacing:-0.206px;">12/21/2021</span>
<span class="t" style="left:792.00px;top:476.00px;font-size:12px;color:#12699f;letter-spacing:-0.083px;">SO-0049719-D-D</span>
<span class="t" style="left:999.00px;top:476.00px;font-size:12px;color:#6c6c6c;letter-spacing:-0.357px;">Ready to Process</span>
<div class="r" style="left:475px;top:501.5px;width:18px;height:18px;background:transparent;border:2px solid #005b99;box-sizing:border-box;border-radius:2.500px;"></div>
<span class="t" style="left:604.00px;top:501.00px;font-size:12px;color:#1e1e1e;letter-spacing:-0.162px;">test 11</span>
<span class="t" style="left:704.00px;top:501.00px;font-size:12px;color:#1e1e1e;letter-spacing:-0.206px;">12/17/2021</span>
<span class="t" style="left:792.00px;top:501.00px;font-size:12px;color:#12699f;letter-spacing:-0.142px;">SO-0049554-D</span>
<span class="t" style="left:999.00px;top:501.00px;font-size:12px;color:#6c6c6c;letter-spacing:-0.001px;">Draft</span>
<div class="r" style="left:469px;top:523px;width:881px;height:30px;background:#ecf3f7;"></div>
<div class="r" style="left:475px;top:529.0px;width:18px;height:18px;background:transparent;border:2px solid #005b99;box-sizing:border-box;border-radius:2.500px;"></div>
<span class="t" style="left:604.00px;top:529.00px;font-size:12px;color:#1e1e1e;letter-spacing:-0.162px;">test 11</span>
<span class="t" style="left:704.00px;top:529.00px;font-size:12px;color:#1e1e1e;letter-spacing:-0.206px;">12/17/2021</span>
<span class="t" style="left:792.00px;top:529.00px;font-size:12px;color:#12699f;letter-spacing:-0.142px;">SO-0049550-D</span>
<span class="t" style="left:999.00px;top:521.00px;font-size:12px;color:#6c6c6c;letter-spacing:-0.029px;">Pending Vendor</span>
<span class="t" style="left:999.00px;top:536.00px;font-size:12px;color:#6c6c6c;letter-spacing:0.062px;">Quote</span>
<div class="r" style="left:475px;top:556.5px;width:18px;height:18px;background:transparent;border:2px solid #005b99;box-sizing:border-box;border-radius:2.500px;"></div>
<span class="t" style="left:504.00px;top:556.00px;font-size:12px;color:#1e1e1e;letter-spacing:0.111px;">Walk-In</span>
<span class="t" style="left:604.00px;top:556.00px;font-size:12px;color:#1e1e1e;letter-spacing:-0.162px;">test 11</span>
<span class="t" style="left:704.00px;top:556.00px;font-size:12px;color:#1e1e1e;letter-spacing:-0.206px;">12/17/2021</span>
<span class="t" style="left:792.00px;top:556.00px;font-size:12px;color:#12699f;letter-spacing:-0.142px;">SO-0049547-D</span>
<span class="t" style="left:999.00px;top:556.00px;font-size:12px;color:#6c6c6c;letter-spacing:-0.001px;">Draft</span>
<div class="r" style="left:469px;top:578px;width:881px;height:25px;background:#ecf3f7;"></div>
<div class="r" style="left:475px;top:581.5px;width:18px;height:18px;background:transparent;border:2px solid #005b99;box-sizing:border-box;border-radius:2.500px;"></div>
<span class="t" style="left:504.00px;top:581.00px;font-size:12px;color:#1e1e1e;letter-spacing:0.111px;">Walk-In</span>
<span class="t" style="left:604.00px;top:581.00px;font-size:12px;color:#1e1e1e;letter-spacing:-0.162px;">test 11</span>
<span class="t" style="left:704.00px;top:581.00px;font-size:12px;color:#1e1e1e;letter-spacing:-0.206px;">12/10/2021</span>
<span class="t" style="left:792.00px;top:581.00px;font-size:12px;color:#12699f;letter-spacing:-0.142px;">SO-0049095-D</span>
<span class="t" style="left:999.00px;top:581.00px;font-size:12px;color:#6c6c6c;letter-spacing:-0.357px;">Ready to Process</span>
<div class="r" style="left:498px;top:137px;width:1px;height:466px;background:rgba(0,0,0,0.085);"></div>
<div class="r" style="left:598px;top:137px;width:1px;height:466px;background:rgba(0,0,0,0.085);"></div>
<div class="r" style="left:698px;top:137px;width:1px;height:466px;background:rgba(0,0,0,0.085);"></div>
<div class="r" style="left:783px;top:137px;width:1px;height:466px;background:rgba(0,0,0,0.085);"></div>
<div class="r" style="left:893px;top:137px;width:1px;height:466px;background:rgba(0,0,0,0.085);"></div>
<div class="r" style="left:993px;top:137px;width:1px;height:466px;background:rgba(0,0,0,0.085);"></div>
<div class="r" style="left:1093px;top:137px;width:1px;height:466px;background:rgba(0,0,0,0.085);"></div>
<div class="r" style="left:1213px;top:137px;width:1px;height:466px;background:rgba(0,0,0,0.085);"></div>
<div class="r" style="left:1313px;top:137px;width:1px;height:466px;background:rgba(0,0,0,0.085);"></div>
<div class="r" style="left:1354px;top:186px;width:7px;height:53px;background:#d6d6d6;"></div>
<svg class="r" style="left:1349.5px;top:167.5px;" width="16" height="16" viewBox="-8 -8 16 16" preserveAspectRatio="none"><path d="M-3.5 1.75L0 -1.75L3.5 1.75" fill="none" stroke="#e0e0e0" stroke-width="1"/></svg>
<svg class="r" style="left:1349.5px;top:588px;" width="16" height="16" viewBox="-8 -8 16 16" preserveAspectRatio="none"><path d="M-3.5 -1.75L0 1.75L3.5 -1.75" fill="none" stroke="#e0e0e0" stroke-width="1"/></svg>
<div class="r" style="left:484px;top:608px;width:481px;height:7px;background:#dbdbdb;"></div>
<svg class="r" style="left:472.7px;top:606.4px;" width="8" height="10" viewBox="0 0 8 10" preserveAspectRatio="none"><path d="M5.500 1.500L2 5L5.500 8.500" fill="none" stroke="#e6e6e6" stroke-width="1.300"/></svg>
<svg class="r" style="left:1339px;top:606px;" width="8" height="10" viewBox="0 0 8 10" preserveAspectRatio="none"><path d="M2.500 1.500L6 5L2.500 8.500" fill="none" stroke="#e3e3e3" stroke-width="1"/></svg>
<div class="r" style="left:469px;top:619px;width:897px;height:1px;background:#dcdcdc;"></div>
<div class="r" style="left:1365px;top:136px;width:1px;height:484px;background:#dcdcdc;"></div>
<span class="t" style="left:648.70px;top:633.00px;font-size:12px;color:#111;letter-spacing:-0.403px;">Total Sales:</span>
<span class="t" style="right:594.40px;top:633.00px;font-size:12px;color:#111;letter-spacing:0.218px;font-weight:700;">$73,746.98</span>
<span class="t" style="left:780.50px;top:633.00px;font-size:12px;color:#111;letter-spacing:-0.207px;">Total Tax:</span>
<span class="t" style="right:478.20px;top:633.00px;font-size:12px;color:#111;letter-spacing:0.208px;font-weight:700;">$3,731.96</span>
<span class="t" style="left:896.60px;top:633.00px;font-size:12px;color:#111;letter-spacing:0.191px;">Total Amount:</span>
<span class="t" style="right:328.50px;top:633.00px;font-size:12px;color:#111;letter-spacing:0.218px;font-weight:700;">$77,478.94</span>
<span class="t" style="left:1046.80px;top:633.00px;font-size:12px;color:#111;letter-spacing:-0.185px;">Total Payments:</span>
<span class="t" style="right:170.60px;top:633.00px;font-size:12px;color:#111;letter-spacing:0.218px;font-weight:700;">$59,906.66</span>
<span class="t" style="left:1204.80px;top:633.00px;font-size:12px;color:#111;letter-spacing:-0.253px;">Open Balance:</span>
<span class="t" style="right:19.60px;top:633.00px;font-size:12px;color:#111;letter-spacing:0.218px;font-weight:700;">$17,572.28</span>
<div class="r" style="left:280px;top:244px;width:324.5px;height:300px;background:#fff;border:1px solid #7f9db0;box-sizing:border-box;box-shadow:0 1px 3px rgba(0,0,0,0.15);"></div>
<div class="r" style="left:283.3px;top:436.2px;width:318.5px;height:26.2px;background:#f8f8f8;border:1px solid #e6e6e6;box-sizing:border-box;"></div>
<span class="t" style="left:294.00px;top:251.00px;font-size:12px;color:#1e1e1e;letter-spacing:-0.263px;">/234,Aser</span>
<span class="t" style="left:294.00px;top:278.00px;font-size:12px;color:#1e1e1e;letter-spacing:0.197px;">Admin</span>
<span class="t" style="left:294.00px;top:305.00px;font-size:12px;color:#1e1e1e;letter-spacing:0.080px;">joel</span>
<span class="t" style="left:294.00px;top:332.00px;font-size:12px;color:#1e1e1e;letter-spacing:0.197px;">Admin</span>
<span class="t" style="left:294.00px;top:359.00px;font-size:12px;color:#1e1e1e;letter-spacing:0.081px;">ktest-vendor</span>
<span class="t" style="left:294.00px;top:386.00px;font-size:12px;color:#1e1e1e;letter-spacing:-0.170px;">KArina</span>
<span class="t" style="left:294.00px;top:413.00px;font-size:12px;color:#1e1e1e;letter-spacing:-0.450px;transform:scaleX(0.9640);transform-origin:left center;">123456</span>
<span class="t" style="left:294.00px;top:440.00px;font-size:12px;color:#1e1e1e;letter-spacing:-0.085px;">test</span>
<span class="t" style="left:294.00px;top:467.00px;font-size:12px;color:#1e1e1e;letter-spacing:-0.087px;">test app</span>
<svg class="r" style="left:593.5px;top:532.5px;" width="10" height="10" viewBox="0 0 10 10" preserveAspectRatio="none"><rect x="7.80" y="0.00" width="1.200" height="1.200" fill="#b4b4b4"/><rect x="7.80" y="2.50" width="1.200" height="1.200" fill="#b4b4b4"/><rect x="5.30" y="2.50" width="1.200" height="1.200" fill="#b4b4b4"/><rect x="7.80" y="5.00" width="1.200" height="1.200" fill="#b4b4b4"/><rect x="5.30" y="5.00" width="1.200" height="1.200" fill="#b4b4b4"/><rect x="2.80" y="5.00" width="1.200" height="1.200" fill="#b4b4b4"/><rect x="7.80" y="7.50" width="1.200" height="1.200" fill="#b4b4b4"/><rect x="5.30" y="7.50" width="1.200" height="1.200" fill="#b4b4b4"/><rect x="2.80" y="7.50" width="1.200" height="1.200" fill="#b4b4b4"/><rect x="0.30" y="7.50" width="1.200" height="1.200" fill="#b4b4b4"/></svg>
<svg class="r" style="left:196px;top:552px;" width="90" height="46" viewBox="196 552 90 46" preserveAspectRatio="none"><defs><filter id="sh" x="-20%" y="-30%" width="140%" height="170%"><feGaussianBlur in="SourceAlpha" stdDeviation="1.200"/><feOffset dx="1.300" dy="2"/><feComponentTransfer><feFuncA type="linear" slope="0.9"/></feComponentTransfer><feMerge><feMergeNode/><feMergeNode in="SourceGraphic"/></feMerge></filter></defs>
<g filter="url(#sh)"><path d="M207.860 579.490 L255.690 566.740 L252.320 561.770 L270.800 567.100 L257.760 581.230 L258.160 575.600 L210.550 589.120 A5 5 0 0 1 207.860 579.490Z" fill="#fd5a4b" stroke="#fd5a4b" stroke-width="0.300" stroke-linejoin="round"/></g></svg>
</div></body></html>
